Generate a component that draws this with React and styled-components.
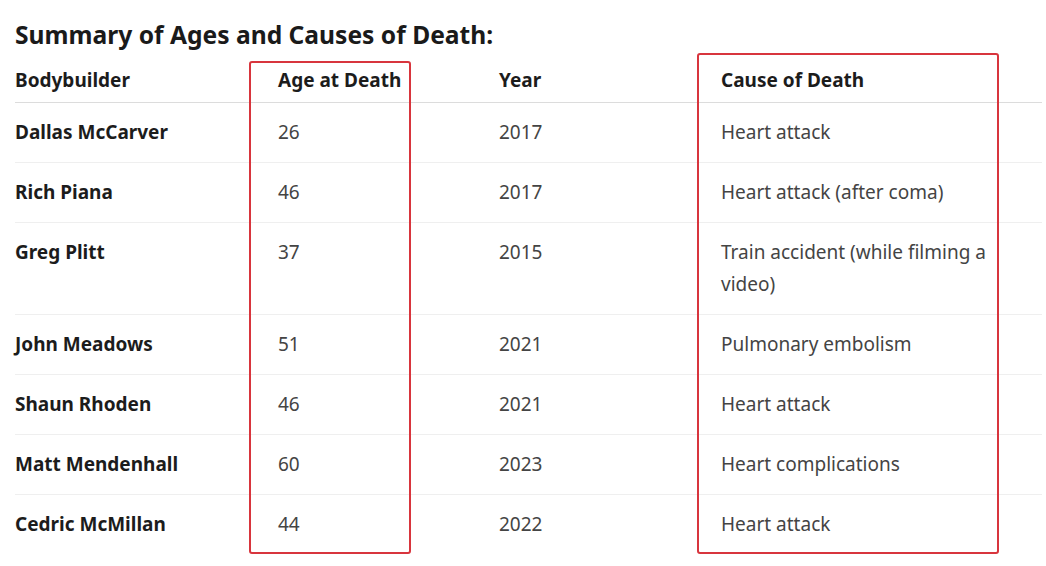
import React from "react";
import styled, { createGlobalStyle } from "styled-components";

const Global = createGlobalStyle`
  html, body { margin: 0; padding: 0; background: #ffffff; }
  body { font-family: "Noto Sans", "Open Sans", sans-serif; }
`;

const Page = styled.div`
  width: 1046px;
  height: 566px;
  box-sizing: border-box;
  padding: 19px 4px 0 15px;
  overflow: hidden;
`;

const Title = styled.h2`
  margin: 0 0 7px;
  font-size: 24.6px;
  line-height: 32px;
  font-weight: 700;
  color: #1a1a1a;
`;

const TableWrap = styled.div`
  position: relative;
  width: 1027px;
`;

const Table = styled.table`
  width: 100%;
  border-collapse: collapse;
  table-layout: fixed;
`;

const Th = styled.th`
  text-align: left;
  font-size: 19px;
  line-height: 32px;
  font-weight: 700;
  color: #1c1c1c;
  padding: 6px 16px;
  border-bottom: 1px solid #dcdcdc;
  &:first-child { padding-left: 0; }
`;

const Row = styled.tr`
  & + & td { border-top: 1px solid #efefef; }
`;

const Td = styled.td`
  vertical-align: top;
  font-size: 19px;
  line-height: 32px;
  padding: 13px 16px 14px;
  color: ${(p) => (p.$strong ? "#1c1c1c" : "#444444")};
  font-weight: ${(p) => (p.$strong ? 700 : 400)};
  &:first-child { padding-left: 0; }
`;

const Highlight = styled.div`
  position: absolute;
  left: ${(p) => p.$left}px;
  top: ${(p) => p.$top}px;
  width: ${(p) => p.$width}px;
  bottom: 0;
  border: 2.5px solid #d8353d;
  border-radius: 3px;
  box-sizing: border-box;
  pointer-events: none;
`;

const rows = [
  ["Dallas McCarver", "26", "2017", "Heart attack"],
  ["Rich Piana", "46", "2017", "Heart attack (after coma)"],
  ["Greg Plitt", "37", "2015", "Train accident (while filming a video)"],
  ["John Meadows", "51", "2021", "Pulmonary embolism"],
  ["Shaun Rhoden", "46", "2021", "Heart attack"],
  ["Matt Mendenhall", "60", "2023", "Heart complications"],
  ["Cedric McMillan", "44", "2022", "Heart attack"],
];

export default function App() {
  return (
    <>
      <Global />
      <Page>
        <Title>Summary of Ages and Causes of Death:</Title>
        <TableWrap>
          <Table>
            <colgroup>
              <col style={{ width: 247 }} />
              <col style={{ width: 221 }} />
              <col style={{ width: 222 }} />
              <col style={{ width: 337 }} />
            </colgroup>
            <thead>
              <tr>
                <Th>Bodybuilder</Th>
                <Th>Age at Death</Th>
                <Th>Year</Th>
                <Th>Cause of Death</Th>
              </tr>
            </thead>
            <tbody>
              {rows.map((r) => (
                <Row key={r[0]}>
                  <Td $strong>{r[0]}</Td>
                  <Td>{r[1]}</Td>
                  <Td>{r[2]}</Td>
                  <Td>{r[3]}</Td>
                </Row>
              ))}
            </tbody>
          </Table>
          <Highlight $left={234} $top={3} $width={162} />
          <Highlight $left={682} $top={-5} $width={302} />
        </TableWrap>
      </Page>
    </>
  );
}
